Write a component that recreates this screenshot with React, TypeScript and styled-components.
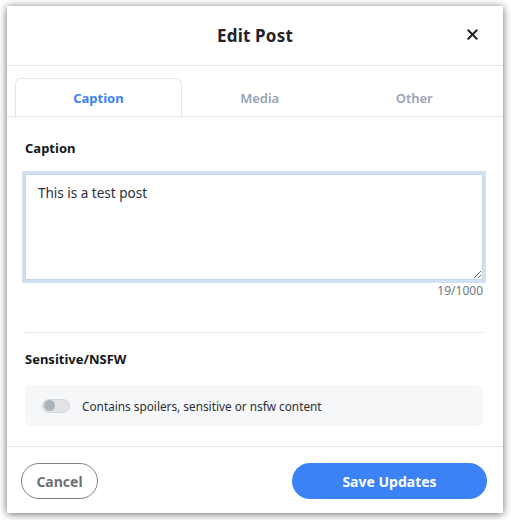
import styled, { createGlobalStyle } from "styled-components";
import { X } from "lucide-react";

const GlobalStyle = createGlobalStyle`
  html, body {
    margin: 0;
    background: #ffffff;
  }
  body {
    font-family: "Noto Sans", "Open Sans", sans-serif;
  }
  * {
    box-sizing: border-box;
  }
`;

const tabs = ["Caption", "Media", "Other"];

const App = () => {
  const caption = "This is a test post";

  return (
    <Page>
      <GlobalStyle />
      <Modal>
        <Header>
          <h2>Edit Post</h2>
          <CloseButton aria-label="Close">
            <X size={17} strokeWidth={2.8} />
          </CloseButton>
        </Header>

        <TabBar>
          {tabs.map((tab, i) => (
            <Tab key={tab} $active={i === 0}>
              {tab}
            </Tab>
          ))}
        </TabBar>

        <Body>
          <Label>Caption</Label>
          <TextArea defaultValue={caption} />
          <Counter>{caption.length}/1000</Counter>

          <Divider />

          <Label>Sensitive/NSFW</Label>
          <OptionBox>
            <Toggle>
              <span />
            </Toggle>
            <p>Contains spoilers, sensitive or nsfw content</p>
          </OptionBox>
        </Body>

        <Footer>
          <CancelButton>Cancel</CancelButton>
          <SaveButton>Save Updates</SaveButton>
        </Footer>
      </Modal>
    </Page>
  );
};

const Page = styled.div`
  padding: 6px 8px 7px 7px;
`;

const Modal = styled.div`
  width: 496px;
  height: 507px;
  background: #fff;
  box-shadow: 0 1px 8px rgba(0, 0, 0, 0.6);
  display: flex;
  flex-direction: column;
`;

const Header = styled.div`
  height: 60px;
  flex-shrink: 0;
  border-bottom: 1px solid #e3e5ea;
  display: flex;
  align-items: center;
  justify-content: center;
  position: relative;
  h2 {
    margin: 0;
    font-size: 17px;
    font-weight: 700;
    color: #1f2328;
    letter-spacing: 0.2px;
  }
`;

const CloseButton = styled.button`
  position: absolute;
  right: 22px;
  top: 20px;
  border: none;
  background: none;
  padding: 0;
  display: flex;
  color: #1f2328;
  cursor: pointer;
`;

const TabBar = styled.div`
  display: flex;
  padding: 12px 12px 0 8px;
  border-bottom: 1px solid #e3e5ea;
`;

const Tab = styled.div<{ $active?: boolean }>`
  flex: 1 1 auto;
  height: 38px;
  display: flex;
  align-items: center;
  justify-content: center;
  font-size: 13px;
  font-weight: ${(p) => (p.$active ? 700 : 600)};
  color: ${(p) => (p.$active ? "#3b82f6" : "#97a3b6")};
  border: 1px solid ${(p) => (p.$active ? "#e3e5ea" : "transparent")};
  border-bottom: none;
  border-radius: 6px 6px 0 0;
  padding: 0 57px;
`;

const Body = styled.div`
  flex: 1;
  padding: 22px 20px 20px 18px;
  display: flex;
  flex-direction: column;
`;

const Label = styled.h4`
  margin: 0;
  font-size: 13px;
  line-height: 18px;
  font-weight: 700;
  color: #15171a;
`;

const TextArea = styled.textarea`
  margin-top: 17px;
  height: 106px;
  width: 100%;
  resize: vertical;
  border: 1px solid #c3d6ec;
  box-shadow: 0 0 0 3px #d2e1f1;
  outline: none;
  padding: 8px 12px;
  font-family: inherit;
  font-size: 13.5px;
  line-height: 20px;
  color: #2b2f36;
`;

const Counter = styled.div`
  margin-top: 3px;
  text-align: right;
  font-size: 12px;
  line-height: 16px;
  color: #71767e;
`;

const Divider = styled.hr`
  margin: 33px 0 17px;
  border: none;
  border-top: 1px solid #e3e5ea;
`;

const OptionBox = styled.div`
  margin-top: 17px;
  height: 41px;
  background: #f6f7f9;
  border-radius: 6px;
  display: flex;
  align-items: center;
  gap: 12px;
  padding: 0 17px;
  p {
    margin: 0;
    font-size: 11.8px;
    color: #2b2f36;
  }
`;

const Toggle = styled.div`
  width: 28px;
  height: 14px;
  border-radius: 7px;
  background: #e1e3e7;
  border: 1px solid #d3d6db;
  display: flex;
  align-items: center;
  padding: 0 1px;
  span {
    width: 11px;
    height: 11px;
    border-radius: 50%;
    background: #adb3bb;
  }
`;

const Footer = styled.div`
  flex-shrink: 0;
  border-top: 1px solid #e3e5ea;
  padding: 16px 16px 14px 14px;
  display: flex;
  justify-content: space-between;
`;

const CancelButton = styled.button`
  width: 77px;
  height: 36px;
  border-radius: 18px;
  border: 1px solid #7c8289;
  background: #fff;
  color: #6b7178;
  font-family: inherit;
  font-size: 14px;
  font-weight: 700;
`;

const SaveButton = styled.button`
  width: 195px;
  height: 36px;
  border-radius: 18px;
  border: none;
  background: #3b82f6;
  color: #fff;
  font-family: inherit;
  font-size: 14px;
  font-weight: 700;
`;

export default App;
